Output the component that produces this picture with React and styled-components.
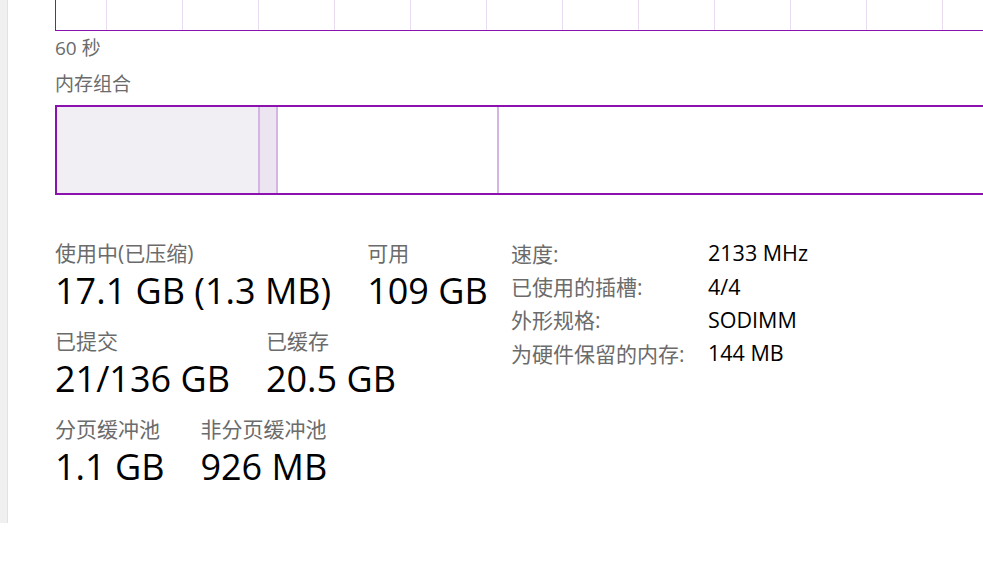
import React from 'react';
import styled, { createGlobalStyle } from 'styled-components';

const GlobalStyle = createGlobalStyle`
    html, body {
        margin: 0;
        padding: 0;
        background: #FFFFFF;
        overflow: hidden;
    }

    body {
        font-family: 'Segoe UI', 'Open Sans', 'Noto Sans CJK SC', sans-serif;
    }
`

const stats = [
    [
        { label: '使用中(已压缩)', value: '17.1 GB (1.3 MB)' },
        { label: '可用', value: '109 GB' },
    ],
    [
        { label: '已提交', value: '21/136 GB' },
        { label: '已缓存', value: '20.5 GB' },
    ],
    [
        { label: '分页缓冲池', value: '1.1 GB' },
        { label: '非分页缓冲池', value: '926 MB' },
    ],
];

const details = [
    { label: '速度:', value: '2133 MHz' },
    { label: '已使用的插槽:', value: '4/4' },
    { label: '外形规格:', value: 'SODIMM' },
    { label: '为硬件保留的内存:', value: '144 MB' },
];

export default function App() {
    return (
        <Page>
            <GlobalStyle />
            <SideStrip />
            <Main>
                <UsageGraph />
                <Caption>60 秒</Caption>
                <Caption $gap={10}>内存组合</Caption>
                <CompositionBar>
                    <Segment $width={203} $fill="#F2EFF4" />
                    <Segment $width={18} $fill="#EDE4F1" />
                    <Segment $width={221} $fill="#FFFFFF" />
                    <Segment $fill="#FFFFFF" $last />
                </CompositionBar>
                <StatsArea>
                    <StatsColumn>
                        {stats.map((row, i) => (
                            <StatRow key={i}>
                                {row.map((s) => (
                                    <Stat key={s.label}>
                                        <StatLabel>{s.label}</StatLabel>
                                        <StatValue>{s.value}</StatValue>
                                    </Stat>
                                ))}
                            </StatRow>
                        ))}
                    </StatsColumn>
                    <DetailTable>
                        {details.map((d) => (
                            <React.Fragment key={d.label}>
                                <DetailLabel>{d.label}</DetailLabel>
                                <DetailValue>{d.value}</DetailValue>
                            </React.Fragment>
                        ))}
                    </DetailTable>
                </StatsArea>
            </Main>
        </Page>
    );
}

const Page = styled.div`
    display: flex;
    align-items: flex-start;
    width: 100vw;
    height: 100vh;
    overflow: hidden;
`

const SideStrip = styled.div`
    flex: 0 0 7px;
    height: 523px;
    background: #F0F0F0;
    border-right: 1px solid #E2E2E2;
`

const Main = styled.div`
    display: flex;
    flex-direction: column;
    padding-left: 47px;
    width: 960px;
    flex-shrink: 0;
`

const UsageGraph = styled.div`
    height: 30px;
    border-left: 1px solid #8B12AE;
    border-bottom: 1px solid #8B12AE;
    background-image: repeating-linear-gradient(
        to right,
        transparent 0px,
        transparent 75px,
        #EBDDF1 75px,
        #EBDDF1 76px
    );
    background-position: -25px 0;
`

const Caption = styled.div`
    margin-top: ${(p) => p.$gap || 4}px;
    font-size: 19px;
    line-height: 26px;
    color: #6B6B6B;
`

const CompositionBar = styled.div`
    display: flex;
    margin-top: 8px;
    height: 86px;
    border: 2px solid #8B12AE;
    border-right: none;
`

const Segment = styled.div`
    flex: ${(p) => (p.$width ? `0 0 ${p.$width}px` : '1')};
    box-sizing: border-box;
    background: ${(p) => p.$fill};
    border-right: ${(p) => (p.$last ? 'none' : '2px solid #D4B4E0')};
`

const StatsArea = styled.div`
    display: grid;
    grid-template-columns: 456px auto;
    margin-top: 41px;
`

const StatsColumn = styled.div`
    display: flex;
    flex-direction: column;
    gap: 12px;
`

const StatRow = styled.div`
    display: flex;
    gap: 36px;
`

const Stat = styled.div`
    display: flex;
    flex-direction: column;
    white-space: nowrap;
`

const StatLabel = styled.div`
    font-size: 21px;
    line-height: 34px;
    color: #6B6B6B;
`

const StatValue = styled.div`
    font-size: 36px;
    line-height: 42px;
    color: #000000;
`

const DetailTable = styled.div`
    display: grid;
    grid-template-columns: 197px auto;
    grid-auto-rows: 33.4px;
    align-items: center;
    white-space: nowrap;
`

const DetailLabel = styled.div`
    font-size: 21px;
    color: #6B6B6B;
`

const DetailValue = styled.div`
    font-size: 21.5px;
    color: #000000;
`
